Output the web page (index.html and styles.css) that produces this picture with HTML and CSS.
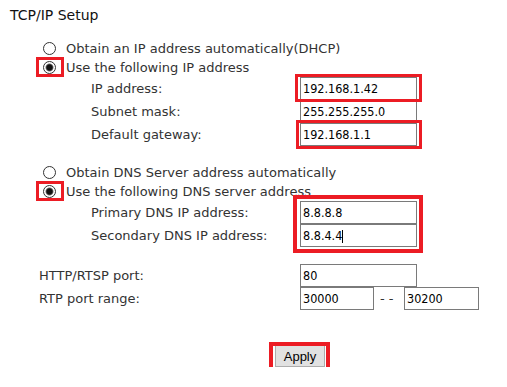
FILE: index.html
```html
<!DOCTYPE html>
<html lang="en">
    <head>
        <meta charset="UTF-8" />
        <title>TCP/IP Setup</title>
        <link rel="stylesheet" href="styles.css">
    </head>
    <body>
        <h1 class="title">TCP/IP Setup</h1>

        <div class="choices">
            <div class="choice"><span class="radio"></span>Obtain an IP address automatically(DHCP)</div>
            <div class="choice"><span class="radio on mark"></span>Use the following IP address</div>
        </div>
        <div class="fields">
            <label for="ip">IP address:</label>
            <span class="hl hl-ip"><input type="text" id="ip" value="192.168.1.42" /></span>
            <label for="mask">Subnet mask:</label>
            <span><input type="text" id="mask" value="255.255.255.0" /></span>
            <label for="gw">Default gateway:</label>
            <span class="hl hl-gw"><input type="text" id="gw" value="192.168.1.1" /></span>
        </div>

        <div class="choices dns">
            <div class="choice"><span class="radio"></span>Obtain DNS Server address automatically</div>
            <div class="choice"><span class="radio on mark"></span>Use the following DNS server address</div>
        </div>
        <div class="fields">
            <label for="dns1" class="row1">Primary DNS IP address:</label>
            <label for="dns2" class="row2">Secondary DNS IP address:</label>
            <div class="hl hl-dns">
                <input type="text" id="dns1" value="8.8.8.8" />
                <input type="text" id="dns2" value="8.8.4.4" />
                <span class="caret"></span>
            </div>
        </div>

        <div class="ports">
            <label for="http">HTTP/RTSP port:</label>
            <span><input type="text" id="http" value="80" /></span>
            <label for="rtp1">RTP port range:</label>
            <span class="range">
                <input type="text" id="rtp1" class="short" value="30000" />
                <span class="dash">--</span>
                <input type="text" id="rtp2" class="short" value="30200" />
            </span>
        </div>

        <div class="actions">
            <span class="hl hl-btn"><button>Apply</button></span>
        </div>
    </body>
</html>
```

FILE: styles.css
```css
* {
    box-sizing: border-box;
}
body {
    margin: 0;
    font-family: "DejaVu Sans", Verdana, sans-serif;
    font-size: 13px;
    color: #333;
    background-color: #fff;
}
.title {
    margin: 0;
    padding: 7px 0 0 10px;
    font-size: 14px;
    font-weight: normal;
    line-height: 16px;
    color: #111;
}
.choices {
    margin-top: 16px;
    padding-left: 43px;
}
.choices.dns {
    margin-top: 17px;
}
.choice {
    display: flex;
    align-items: center;
    gap: 10px;
    height: 19px;
}
.radio {
    position: relative;
    flex: none;
    width: 13px;
    height: 13px;
    border: 1px solid #333;
    border-radius: 50%;
    background-color: #fff;
}
.radio.on {
    background: radial-gradient(circle, #111 0, #111 2.6px, #555 3.4px, #fff 4.4px);
}
.fields {
    display: grid;
    grid-template-columns: 209px 117px;
    grid-auto-rows: 23px;
    align-items: center;
    padding-left: 91px;
}
.fields label {
    line-height: 23px;
}
.row1 {
    grid-column: 1;
    grid-row: 1;
}
.row2 {
    grid-column: 1;
    grid-row: 2;
}
.hl-dns {
    grid-column: 2;
    grid-row: 1 / span 2;
    align-self: start;
}
input {
    display: block;
    width: 117px;
    height: 23px;
    margin: 0;
    padding: 0 2px;
    border: 1px solid #7a7a7a;
    font-family: "DejaVu Sans Condensed", "Liberation Sans", Arial, sans-serif;
    font-size: 12.5px;
    color: #000;
    background-color: #fff;
}
/* red annotation frames */
.hl {
    position: relative;
    display: block;
}
.hl::after,
.mark::after {
    content: "";
    position: absolute;
    border: 3px solid #ec1c24;
    pointer-events: none;
}
.mark::after {
    top: -5px;
    bottom: -4px;
    left: -8px;
    right: -9px;
}
.hl-ip::after {
    top: -3px;
    bottom: -2px;
    left: -5px;
    right: -5px;
}
.hl-gw::after {
    top: -3px;
    bottom: -3px;
    left: -4px;
    right: -5px;
}
.hl-dns::after {
    top: -6px;
    bottom: -6px;
    left: -7px;
    right: -6px;
    border-width: 4px;
}
.caret {
    position: absolute;
    left: 42px;
    top: 29px;
    width: 1px;
    height: 13px;
    background-color: #000;
}
.ports {
    display: grid;
    grid-template-columns: 261px auto;
    grid-auto-rows: 23px;
    align-items: center;
    margin-top: 17px;
    padding-left: 39px;
}
.range {
    display: flex;
    align-items: center;
}
input.short {
    width: 74px;
}
.range input.short:last-child {
    width: 75px;
}
.dash {
    width: 30px;
    padding-left: 6px;
    letter-spacing: 4px;
    font-size: 13px;
    color: #333;
}
.actions {
    margin-top: 35px;
    padding-left: 275px;
}
.hl-btn {
    display: inline-block;
}
.hl-btn::after {
    top: -3px;
    bottom: -4px;
    left: -6px;
    right: -5px;
    border-width: 4px;
}
button {
    display: block;
    width: 50px;
    height: 22px;
    padding: 0;
    border: 1px solid #adadad;
    background-color: #e1e1e1;
    font-family: "Liberation Sans", Arial, sans-serif;
    font-size: 13px;
    color: #000;
}
```
